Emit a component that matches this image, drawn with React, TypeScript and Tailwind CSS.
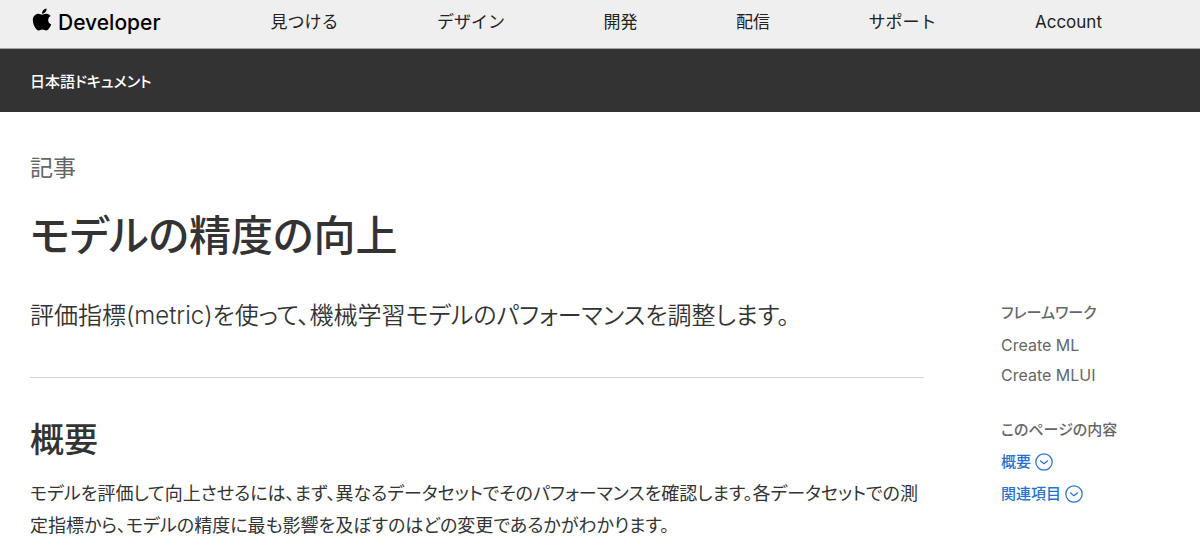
import { FaApple } from "react-icons/fa";

const navItems = ["見つける", "デザイン", "開発", "配信", "サポート", "Account"];

const frameworks = ["Create ML", "Create MLUI"];

const sections = [
  { id: "overview", label: "概要" },
  { id: "see-also", label: "関連項目" },
];

function CircleChevron() {
  return (
    <svg viewBox="0 0 18 18" className="h-[18px] w-[18px]" fill="none" stroke="currentColor" aria-hidden="true">
      <circle cx="9" cy="9" r="8.2" strokeWidth="1.2" />
      <path d="M5.6 8 9 10.7 12.4 8" strokeWidth="1.3" strokeLinecap="round" strokeLinejoin="round" />
    </svg>
  );
}

function GlobalNav() {
  return (
    <header className="border-b border-[#a0a3a2] bg-[#efefef]">
      <nav className="flex h-12 items-center gap-[110px] pr-[98px] pb-[3px] pl-8 text-[17px] text-[#222]">
        <a href="#" className="flex items-center gap-1.5 text-[21px] font-medium text-black">
          <FaApple className="mb-1.5 h-[25px] w-5" aria-hidden="true" />
          Developer
        </a>
        <ul className="flex flex-1 items-center justify-between">
          {navItems.map((item) => (
            <li key={item}>
              <a href="#">{item}</a>
            </li>
          ))}
        </ul>
      </nav>
    </header>
  );
}

function Sidebar() {
  return (
    <aside className="w-[170px] shrink-0 pt-[185px] text-[15px] text-[#666]">
      <h2 className="leading-[32px] font-medium">フレームワーク</h2>
      <ul className="pt-px text-base leading-[30px]">
        {frameworks.map((name) => (
          <li key={name}>{name}</li>
        ))}
      </ul>
      <h2 className="mt-6 leading-[32px] font-medium">このページの内容</h2>
      <ul className="font-medium text-[#2a72c9]">
        {sections.map((section) => (
          <li key={section.id}>
            <a href={`#${section.id}`} className="flex h-8 items-center gap-1">
              {section.label}
              <CircleChevron />
            </a>
          </li>
        ))}
      </ul>
    </aside>
  );
}

export default function App() {
  return (
    <div lang="ja" className="bg-white font-['Inter','Noto_Sans_CJK_JP',sans-serif] text-[#333]">
      <GlobalNav />
      <div className="[font-feature-settings:'palt']">
        <div className="flex h-[63px] items-center bg-[#333] px-[30px] pt-1 text-[15px] font-medium text-white">
          日本語ドキュメント
        </div>

        <div className="flex items-start gap-[77px] pr-[29px] pl-[30px]">
          <main className="min-w-0 flex-1 pt-10">
            <p className="text-[23px] leading-[32px] text-[#666]">記事</p>
            <h1 className="mt-5 text-[42px] leading-[64px] font-medium">モデルの精度の向上</h1>
            <p className="mt-8 text-2xl leading-[32px] font-[350]">
              評価指標(metric)を使って、機械学習モデルのパフォーマンスを調整します。
            </p>
            <hr className="mt-[45px] border-[#d6d6d6]" />
            <section id="overview" className="pt-9">
              <h2 className="text-[34px] leading-[52px] font-medium">概要</h2>
              <p className="mt-3 text-lg leading-[32px]">
                モデルを評価して向上させるには、まず、異なるデータセットでそのパフォーマンスを確認します。各データセットでの測定指標から、モデルの精度に最も影響を及ぼすのはどの変更であるかがわかります。
              </p>
            </section>
          </main>
          <Sidebar />
        </div>
      </div>
    </div>
  );
}
